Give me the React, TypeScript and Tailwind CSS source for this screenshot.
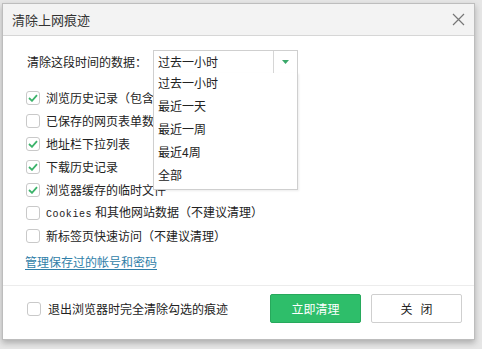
import React from "react";

const font = { fontFamily: '"Noto Sans CJK SC", "Noto Sans", sans-serif' };

function Box({ checked }: { checked?: boolean }) {
  return (
    <div className="w-[14px] h-[14px] rounded-[3px] border border-[#c9c9c9] bg-white flex items-center justify-center shrink-0">
      {checked && (
        <svg width="10" height="8" viewBox="0 0 10 8">
          <path d="M1 4 L4 6.8 L9 1.2" fill="none" stroke="#3bb36a" strokeWidth="1.8" />
        </svg>
      )}
    </div>
  );
}

function Row({ checked, children }: { checked?: boolean; children: React.ReactNode }) {
  return (
    <div className="h-[23px] flex items-center gap-[6px] pl-[23px]">
      <Box checked={checked} />
      <span className="text-[12px] text-[#222] whitespace-nowrap leading-none">{children}</span>
    </div>
  );
}

export default function App() {
  return (
    <div className="w-[482px] h-[349px] bg-[#e6e6e6] pt-[3px] pl-[2px] overflow-hidden" style={font}>
      <div className="relative w-[473px] h-[337px] bg-white border border-[#bdbdbd] shadow-[0_3px_6px_rgba(0,0,0,0.25)] flex flex-col">
        <div className="h-[32px] bg-[#f3f3f3] border-b border-[#d6d6d6] flex items-center justify-between pl-[9px] pr-[8px] shrink-0">
          <span className="text-[13px] text-[#333]">清除上网痕迹</span>
          <svg width="13" height="13" viewBox="0 0 13 13" className="mr-[1px]">
            <path d="M1 1 L12 12 M12 1 L1 12" stroke="#777" strokeWidth="1.2" />
          </svg>
        </div>
        <div className="flex items-center pt-[14px] pl-[24px] h-[38px]">
          <span className="text-[12px] text-[#222] w-[126px]">清除这段时间的数据：</span>
          <div className="w-[145px] h-[24px] border border-[#cfcfcf] flex">
            <div className="flex-1 flex items-center pl-[4px] text-[12px] text-[#222]">过去一小时</div>
            <div className="w-[24px] border-l border-[#d6d6d6] flex items-center justify-center">
              <svg width="7" height="4" viewBox="0 0 7 4"><path d="M0 0 L7 0 L3.5 4 Z" fill="#3aa86a" /></svg>
            </div>
          </div>
        </div>
        <div className="pt-[12px] flex flex-col">
          <Row checked>浏览历史记录（包含</Row>
          <Row>已保存的网页表单数</Row>
          <Row checked>地址栏下拉列表</Row>
          <Row checked>下载历史记录</Row>
          <Row checked>浏览器缓存的临时文件</Row>
          <Row>
            <span className="text-[10px] tracking-[0.6px]" style={{ fontFamily: '"Liberation Mono", monospace' }}>Cookies</span> 和其他网站数据（不建议清理）
          </Row>
          <Row>新标签页快速访问（不建议清理）</Row>
          <div className="h-[23px] flex items-center pl-[22px] mt-[3px]">
            <span className="text-[12px] text-[#2f7ea8] underline underline-offset-2">管理保存过的帐号和密码</span>
          </div>
        </div>
        <div className="mt-[12px] border-t border-[#ececec] flex-1 flex items-center pl-[24px] pr-[12px] pb-[8px]">
          <Box />
          <span className="ml-[7px] text-[12px] text-[#222]">退出浏览器时完全清除勾选的痕迹</span>
          <div className="ml-auto flex gap-[10px]">
            <div className="w-[91px] h-[29px] bg-[#2ebe6a] rounded-[2px] flex items-center justify-center text-white text-[12px] border border-[#27a95c]">立即清理</div>
            <div className="w-[91px] h-[29px] bg-white rounded-[2px] flex items-center justify-center text-[#222] text-[12px] border border-[#cfcfcf] tracking-[8px] pl-[8px]">关闭</div>
          </div>
        </div>
        <div className="absolute left-[150px] top-[69px] w-[145px] h-[117px] bg-white border border-[#cfcfcf] border-t-0 shadow-[1px_1px_2px_rgba(0,0,0,0.08)] flex flex-col">
          {["过去一小时", "最近一天", "最近一周", "最近4周", "全部"].map((t) => (
            <div key={t} className="h-[23px] flex items-center pl-[4px] pb-[3px] text-[12px] text-[#222]">{t}</div>
          ))}
        </div>
      </div>
    </div>
  );
}
